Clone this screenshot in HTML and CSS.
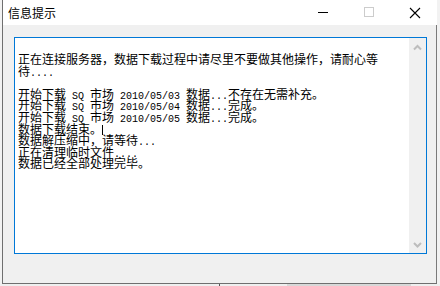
FILE: index.html
```html
<!DOCTYPE html>
<html lang="zh-CN">
<head>
<meta charset="utf-8">
<title>信息提示</title>
<link rel="stylesheet" href="styles.css">
</head>
<body>
<div class="desk">
  <div class="win">
    <div class="titlebar">
      <span class="title">信息提示</span>
      <div class="ctrls">
        <span class="btn"><svg width="46" height="25" viewBox="0 0 46 25"><line x1="18" y1="12.5" x2="28" y2="12.5" stroke="#000" stroke-width="1"/></svg></span>
        <span class="btn"><svg width="46" height="25" viewBox="0 0 46 25"><rect x="18.5" y="7.5" width="9" height="9" fill="none" stroke="#cccccc" stroke-width="1"/></svg></span>
        <span class="btn"><svg width="46" height="25" viewBox="0 0 46 25"><path d="M18 8 L28 18 M28 8 L18 18" stroke="#000" stroke-width="1.1" fill="none"/></svg></span>
      </div>
    </div>
    <div class="client">
      <div class="box">
        <div class="log">正在连接服务器，数据下载过程中请尽里不要做其他操作，请耐心等
待<span class="m">....</span>

开始下载<span class="m"> SQ </span>市场<span class="m"> 2010/05/03 </span>数据<span class="m">...</span>不存在无需补充。
开始下载<span class="m"> SQ </span>市场<span class="m"> 2010/05/04 </span>数据<span class="m">...</span>完成。
开始下载<span class="m"> SQ </span>市场<span class="m"> 2010/05/05 </span>数据<span class="m">...</span>完成。
数据下载结束。<span class="caret"></span>
数据解压缩中，请等待<span class="m">...</span>
正在清理临时文件<span class="m">....</span>
数据已经全部处理完毕。</div>
        <div class="sb">
          <svg width="17" height="17" viewBox="0 0 17 17"><polyline points="5,11.5 8.5,8 12,11.5" fill="none" stroke="#bdbdbd" stroke-width="2"/></svg>
          <svg width="17" height="17" viewBox="0 0 17 17"><polyline points="5,7 8.5,10.5 12,7" fill="none" stroke="#bdbdbd" stroke-width="2"/></svg>
        </div>
      </div>
    </div>
  </div>
</div>
<div class="strip">
  <span class="s1"></span><span class="s2"></span><span class="s3"></span><span class="s4"></span>
</div>
</body>
</html>
```

FILE: styles.css
```css
html, body {
  margin: 0;
  padding: 0;
}
body {
  width: 440px;
  height: 286px;
  overflow: hidden;
  background: #f2f2f2;
  font-family: "Noto Sans CJK SC", sans-serif;
}
.desk {
  padding-left: 2px;
  height: 284px;
}
.win {
  width: 434px;
  height: 283px;
  border-left: 1px solid #6f6f6f;
  border-bottom: 1px solid #6f6f6f;
  display: flex;
  flex-direction: column;
  background: #f0f0f0;
}
.titlebar {
  height: 25px;
  background: #ffffff;
  display: flex;
  align-items: center;
  justify-content: space-between;
  flex: none;
}
.title {
  padding-left: 5px;
  font-size: 12px;
  line-height: 25px;
  color: #000;
  font-family: "Noto Sans CJK SC", sans-serif;
}
.ctrls {
  display: flex;
  margin-right: -1px;
}
.btn {
  display: block;
  width: 46px;
  height: 25px;
}
.btn svg {
  display: block;
}
.client {
  flex: 1;
  border-right: 1px solid #7a7a7a;
  padding: 12px 0 0 11px;
}
.box {
  width: 411px;
  height: 215px;
  border: 1px solid #0078d7;
  background: #ffffff;
  display: flex;
}
.log {
  flex: 1;
  white-space: pre;
  font-family: "Noto Sans CJK SC", sans-serif;
  font-size: 12px;
  line-height: 11.6px;
  color: #000;
  padding: 15px 0 0 3px;
  overflow: hidden;
}
.m {
  font-family: "Liberation Mono", monospace;
  font-size: 10px;
  line-height: 0;
}
.caret {
  display: inline-block;
  width: 1px;
  height: 10px;
  background: #000;
  margin-bottom: -1px;
}
.sb {
  width: 17px;
  background: #f0f0f0;
  display: flex;
  flex-direction: column;
  justify-content: space-between;
}
.sb svg {
  display: block;
}
.strip {
  height: 2px;
  display: flex;
  background: #efefef;
}
.s1 { width: 219px; }
.s2 { width: 1px; background: #555; }
.s3 { width: 67px; }
.s4 { width: 124px; background: #d8d8d8; }
```
